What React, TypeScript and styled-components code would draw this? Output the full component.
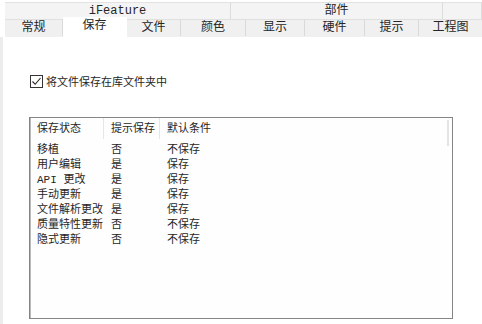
import { Fragment } from 'react';
import styled, { createGlobalStyle } from 'styled-components';

const GlobalStyle = createGlobalStyle`
  html, body {
    margin: 0;
    padding: 0;
    background: #ffffff;
    width: 482px;
    height: 324px;
    overflow: hidden;
  }
  body {
    font-family: "Liberation Mono", "Noto Sans CJK SC", monospace;
    font-size: 11px;
    color: #262626;
  }
`;

const Window = styled.div`
  display: flex;
  flex-direction: column;
  width: 482px;
  height: 324px;
  padding-top: 2px;
  box-sizing: border-box;
`;

const GroupRow = styled.div`
  display: flex;
  margin-left: 5px;
  height: 17px;
`;

const GroupCell = styled.div<{ $w: number }>`
  flex: 0 0 ${(p) => p.$w}px;
  box-sizing: border-box;
  background: #f4f4f4;
  border-top: 1px solid #e2e2e2;
  border-right: 1px solid #dcdcdc;
  display: flex;
  align-items: center;
  justify-content: center;
  line-height: 16px;
  font-size: 12px;
`;

const TabRow = styled.div`
  display: flex;
  margin-left: 5px;
  height: 17px;
  background: #f0f0f0;
  border-bottom: 1px solid #f0f0f0;
`;

const Tab = styled.div<{ $w: number; $active?: boolean }>`
  flex: 0 0 ${(p) => p.$w}px;
  box-sizing: border-box;
  display: flex;
  align-items: center;
  justify-content: center;
  line-height: 16px;
  font-size: 12px;
  background: ${(p) => (p.$active ? '#ffffff' : '#f0f0f0')};
  border-right: 1px solid ${(p) => (p.$active ? '#ffffff' : '#d9d9d9')};
  border-top: 1px solid ${(p) => (p.$active ? '#ffffff' : '#e0e0e0')};
  margin-top: ${(p) => (p.$active ? '-2px' : '0')};
  height: ${(p) => (p.$active ? '20px' : '17px')};
  padding-bottom: ${(p) => (p.$active ? '4px' : '0')};
  position: relative;
  z-index: ${(p) => (p.$active ? 1 : 0)};
`;

const Panel = styled.div`
  flex: 1;
  background: #ffffff;
  border-left: 3px solid #ececec;
  padding: 37px 0 0 26px;
  box-sizing: border-box;
  display: flex;
  flex-direction: column;
`;

const CheckLine = styled.label`
  display: flex;
  align-items: center;
  gap: 3px;
  height: 14px;
  margin-left: 1px;
`;

const Box = styled.span`
  width: 13px;
  height: 13px;
  box-sizing: border-box;
  border: 1px solid #333;
  background: #fff;
  display: flex;
  align-items: center;
  justify-content: center;
`;

const ListBox = styled.div`
  margin-top: 29px;
  width: 424px;
  height: 202px;
  box-sizing: border-box;
  border: 1px solid #858585;
  box-shadow: inset 1px 0 0 #b8b8b8;
  background: #fefefe;
  position: relative;
`;

const ScrollHint = styled.div`
  position: absolute;
  right: 3px;
  top: 2px;
  width: 2px;
  height: 26px;
  background: #e4e4e4;
`;

const Grid = styled.div`
  display: grid;
  grid-template-columns: 74px 56px 1fr;
`;

const HeadCell = styled.div<{ $last?: boolean }>`
  height: 18px;
  padding-top: 3px;
  line-height: 17px;
  padding-left: 7px;
  border-right: ${(p) => (p.$last ? 'none' : '1px solid #e6e6e6')};
  margin-bottom: 4px;
`;

const Cell = styled.div`
  height: 15px;
  line-height: 15px;
  padding-left: 7px;
  white-space: nowrap;
`;

const rows: [string, string, string][] = [
  ['移植', '否', '不保存'],
  ['用户编辑', '是', '保存'],
  ['API 更改', '是', '保存'],
  ['手动更新', '是', '保存'],
  ['文件解析更改', '是', '保存'],
  ['质量特性更新', '否', '不保存'],
  ['隐式更新', '否', '不保存'],
];

const tabs: [string, number][] = [
  ['常规', 58],
  ['保存', 64],
  ['文件', 54],
  ['颜色', 65],
  ['显示', 59],
  ['硬件', 60],
  ['提示', 54],
  ['工程图', 64],
];

export default function App() {
  return (
    <>
      <GlobalStyle />
      <Window>
        <GroupRow>
          <GroupCell $w={226}>iFeature</GroupCell>
          <GroupCell $w={212}>部件</GroupCell>
          <GroupCell $w={39} />
        </GroupRow>
        <TabRow>
          {tabs.map(([label, w]) => (
            <Tab key={label} $w={w} $active={label === '保存'}>
              {label}
            </Tab>
          ))}
        </TabRow>
        <Panel>
          <CheckLine>
            <Box>
              <svg width="11" height="11" viewBox="0 0 11 11">
                <path d="M1.5 5.5 L4.2 8.3 L9.5 2" fill="none" stroke="#222" strokeWidth="1.1" />
              </svg>
            </Box>
            将文件保存在库文件夹中
          </CheckLine>
          <ListBox>
            <ScrollHint />
            <Grid>
              <HeadCell>保存状态</HeadCell>
              <HeadCell>提示保存</HeadCell>
              <HeadCell $last>默认条件</HeadCell>
              {rows.map(([a, b, c]) => (
                <Fragment key={a}>
                  <Cell>{a}</Cell>
                  <Cell>{b}</Cell>
                  <Cell>{c}</Cell>
                </Fragment>
              ))}
            </Grid>
          </ListBox>
        </Panel>
      </Window>
    </>
  );
}
